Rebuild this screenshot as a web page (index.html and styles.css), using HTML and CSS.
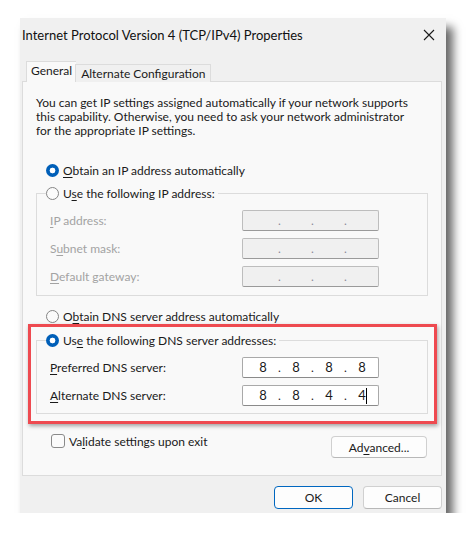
FILE: index.html
```html
<!DOCTYPE html>
<html lang="en">
<head>
    <meta charset="UTF-8">
    <meta name="viewport" content="width=device-width, initial-scale=1.0">
    <title>Internet Protocol Version 4 (TCP/IPv4) Properties</title>
    <link rel="stylesheet" href="styles.css">
</head>
<body>
    <div class="dialog">
        <div class="titlebar">
            <span class="title">Internet Protocol Version 4 (TCP/IPv4) Properties</span>
            <button class="close-btn" aria-label="Close">
                <svg width="12" height="12" viewBox="0 0 12 12"><path d="M1 1 L11 11 M11 1 L1 11" stroke="#1a1a1a" stroke-width="1.1" fill="none"/></svg>
            </button>
        </div>

        <div class="tabs">
            <div class="tab tab-active">General</div>
            <div class="tab">Alternate Configuration</div>
        </div>

        <div class="panel">
            <p class="intro">You can get IP settings assigned automatically if your network supports<br>
                this capability. Otherwise, you need to ask your network administrator<br>
                for the appropriate IP settings.</p>

            <label class="radio-row">
                <span class="radio radio-on"></span><span><u>O</u>btain an IP address automatically</span>
            </label>

            <fieldset class="group">
                <legend>
                    <label class="radio-row">
                        <span class="radio"></span><span>U<u>s</u>e the following IP address:</span>
                    </label>
                </legend>
                <div class="field-row disabled">
                    <span class="field-label"><u>I</u>P address:</span>
                    <div class="ip-box"><span></span><i>.</i><span></span><i>.</i><span></span><i>.</i><span></span></div>
                </div>
                <div class="field-row disabled">
                    <span class="field-label">S<u>u</u>bnet mask:</span>
                    <div class="ip-box"><span></span><i>.</i><span></span><i>.</i><span></span><i>.</i><span></span></div>
                </div>
                <div class="field-row disabled">
                    <span class="field-label"><u>D</u>efault gateway:</span>
                    <div class="ip-box"><span></span><i>.</i><span></span><i>.</i><span></span><i>.</i><span></span></div>
                </div>
            </fieldset>

            <label class="radio-row dns-auto">
                <span class="radio"></span><span>O<u>b</u>tain DNS server address automatically</span>
            </label>

            <div class="dns-section">
                <div class="highlight"></div>
                <fieldset class="group group-dns">
                    <legend>
                        <label class="radio-row">
                            <span class="radio radio-on"></span><span>Us<u>e</u> the following DNS server addresses:</span>
                        </label>
                    </legend>
                    <div class="field-row">
                        <span class="field-label"><u>P</u>referred DNS server:</span>
                        <div class="ip-box ip-active"><span>8</span><i>.</i><span>8</span><i>.</i><span>8</span><i>.</i><span>8</span></div>
                    </div>
                    <div class="field-row">
                        <span class="field-label"><u>A</u>lternate DNS server:</span>
                        <div class="ip-box ip-active"><span>8</span><i>.</i><span>8</span><i>.</i><span>4</span><i>.</i><span class="caret">4</span></div>
                    </div>
                </fieldset>
            </div>

            <div class="bottom-row">
                <label class="check-row">
                    <span class="checkbox"></span><span>Va<u>l</u>idate settings upon exit</span>
                </label>
                <button class="btn btn-advanced">Ad<u>v</u>anced...</button>
            </div>
        </div>

        <div class="footer">
            <button class="btn btn-primary">OK</button>
            <button class="btn">Cancel</button>
        </div>
    </div>
</body>
</html>
```

FILE: styles.css
```css
body {
    margin: 0;
    background: #ffffff;
    font-family: 'Lato', 'Noto Sans', sans-serif;
    font-size: 12px;
    color: #1a1a1a;
}

u {
    text-decoration-thickness: 1px;
    text-underline-offset: 2px;
}

.dialog {
    margin: 18px 0 0 20px;
    width: 426px;
    height: 495px;
    background: #f0f0f0;
    box-shadow: 7px 9px 9px rgba(0, 0, 0, 0.6);
    display: flex;
    flex-direction: column;
}

/* barra de titulo */
.titlebar {
    height: 34px;
    display: flex;
    align-items: center;
    justify-content: space-between;
    padding-left: 2px;
}

.title {
    font-size: 13px;
    color: #111;
}

.close-btn {
    width: 30px;
    height: 30px;
    border: none;
    background: transparent;
    display: flex;
    align-items: center;
    justify-content: center;
    margin-right: 2px;
    padding: 0;
}

.tabs {
    display: flex;
    align-items: flex-end;
    padding: 9px 0 0 6px;
    position: relative;
    z-index: 1;
    margin-bottom: -1px;
}

.tab {
    height: 17px;
    padding: 0 5px;
    border: 1px solid #dcdcdc;
    border-bottom: none;
    background: #f0f0f0;
    line-height: 17px;
    margin-left: -1px;
}

.tab-active {
    height: 20px;
    background: #f9f9f9;
    line-height: 18px;
    padding: 0 4px;
    margin-left: 0;
    border-right: none;
}

.panel {
    margin: 0 4px 0 2px;
    height: 395px;
    box-sizing: border-box;
    background: #f9f9f9;
    border: 1px solid #dcdcdc;
    padding: 14px 13px 0 13px;
}

.intro {
    margin: 0;
    line-height: 14px;
    white-space: nowrap;
}

.radio-row {
    display: flex;
    align-items: center;
    height: 20px;
    gap: 4px;
}

.intro + .radio-row {
    margin: 22px 0 0 10px;
}

.radio {
    width: 11px;
    height: 11px;
    border-radius: 50%;
    border: 1px solid #858585;
    background: #fbfbfb;
    display: inline-block;
    box-sizing: content-box;
}

.radio-on {
    width: 13px;
    height: 13px;
    border: none;
    background: radial-gradient(circle, #ffffff 0, #ffffff 2.6px, #005fb8 3.2px);
}

.group {
    margin: 3px 0 0 0;
    padding: 3px 0 5px 0;
    border: 1px solid #dcdcdc;
    min-width: 0;
}

.group legend {
    padding: 0 3px 0 0;
    margin-left: 9px;
}

.field-row {
    display: flex;
    align-items: center;
    height: 28px;
    padding-left: 13px;
}

.field-label {
    width: 192px;
}

.disabled .field-label {
    color: #a3a3a3;
}

.ip-box {
    width: 137px;
    height: 21px;
    box-sizing: border-box;
    border: 1px solid #bdbdbd;
    border-bottom-color: #9a9a9a;
    border-radius: 2px;
    background: #f0f0f0;
    display: flex;
    align-items: center;
    padding-left: 7px;
}

.ip-box span {
    width: 26px;
    text-align: center;
    font-size: 13px;
}

.ip-box i {
    font-style: normal;
    width: 7px;
    text-align: center;
    color: #8a8a9a;
    font-size: 12px;
}

.ip-active {
    background: #ffffff;
    border-color: #a9a9a9;
    border-bottom-color: #8a8a8a;
}

.ip-active i {
    color: #1a1a1a;
}

.caret {
    position: relative;
}

.caret::after {
    content: "";
    position: absolute;
    top: 1px;
    right: 8px;
    width: 1px;
    height: 16px;
    background: #000;
}

.dns-auto {
    margin: 10px 0 0 10px;
}

.dns-section {
    position: relative;
    margin-top: 4px;
}

.group-dns {
    margin-top: 0;
    padding-bottom: 4px;
}

/* marco rojo de resaltado */
.highlight {
    position: absolute;
    top: -6px;
    left: -8px;
    right: -9px;
    bottom: -10px;
    border: 3px solid #ee4a50;
    box-shadow: 1px 2px 4px rgba(0, 0, 0, 0.35);
    pointer-events: none;
}

.bottom-row {
    display: flex;
    justify-content: space-between;
    align-items: flex-start;
    margin-top: 17px;
}

.check-row {
    display: flex;
    align-items: center;
    height: 20px;
    gap: 4px;
    margin-left: 15px;
}

.checkbox {
    width: 12px;
    height: 12px;
    border: 1px solid #8a8a8a;
    border-radius: 3px;
    background: #fbfbfb;
}

.btn {
    font-family: inherit;
    font-size: 12px;
    color: #1a1a1a;
    background: #fdfdfd;
    border: 1px solid #d0d0d0;
    border-bottom-color: #b8b8b8;
    border-radius: 4px;
    height: 23px;
    width: 79px;
    padding: 0;
}

.btn-advanced {
    width: 96px;
    height: 22px;
    margin: 5px 1px 0 0;
}

.btn-primary {
    border: 1px solid #0067c0;
}

.footer {
    display: flex;
    justify-content: flex-end;
    gap: 10px;
    padding: 10px 4px 0 0;
}
```
